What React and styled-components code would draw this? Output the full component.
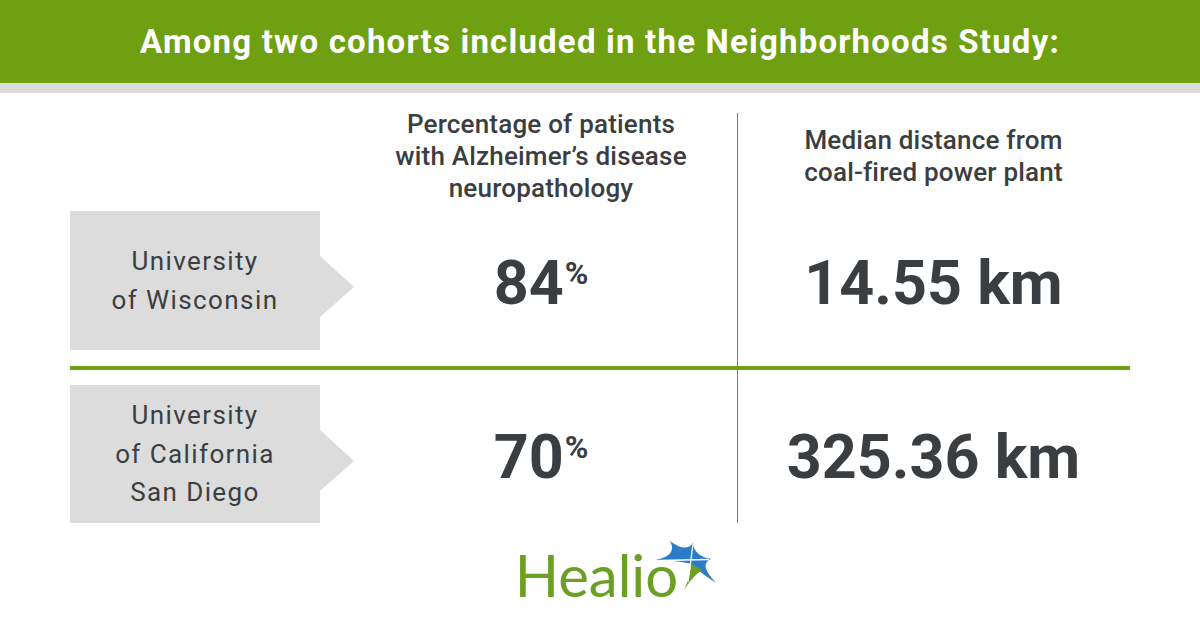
import styled, { createGlobalStyle } from "styled-components";

const GREEN = "#6ea011";
const INK = "#3a3e41";

const GlobalStyle = createGlobalStyle`
  body {
    margin: 0;
    background: #fff;
    font-family: Roboto, "Liberation Sans", sans-serif;
  }
`;

const Page = styled.div`
  width: 1200px;
  height: 630px;
  overflow: hidden;
  background: #fff;
`;

const Banner = styled.header`
  height: 83px;
  background: ${GREEN};
  display: flex;
  align-items: center;
  justify-content: center;
`;

const Title = styled.h1`
  margin: 0;
  color: #fff;
  font-size: 33px;
  font-weight: 700;
  letter-spacing: 1.2px;
  white-space: nowrap;
`;

const Shade = styled.div`
  height: 10px;
  background: #dcdcdc;
`;

const Table = styled.div`
  position: relative;
  margin: 0 70px;
  padding-top: 13px;

  &::after {
    content: "";
    position: absolute;
    left: 667px;
    top: 20px;
    bottom: 0;
    width: 1px;
    background: #7a7a7a;
  }
`;

const Row = styled.div`
  display: grid;
  grid-template-columns: 275px 392px 393px;
  height: ${(p) => p.$h}px;
  margin-bottom: ${(p) => p.$gap || 0}px;
`;

const HeadCell = styled.div`
  display: flex;
  align-items: center;
  justify-content: center;
  text-align: center;
  color: ${INK};
  font-size: 26px;
  font-weight: 500;
  line-height: 32px;
  letter-spacing: 0.2px;
`;

const LabelShape = styled.div`
  width: 284px;
  height: 100%;
  background: #dcdcdc;
  clip-path: polygon(
    0 0,
    250px 0,
    250px 45px,
    284px 76px,
    250px 106px,
    250px 100%,
    0 100%
  );
  display: flex;
  align-items: center;
  justify-content: center;
  padding-right: 34px;
  box-sizing: border-box;
  text-align: center;
  color: ${INK};
  font-size: 26px;
  font-weight: 400;
  line-height: 38.5px;
  letter-spacing: 1.4px;
`;

const ValueCell = styled.div`
  display: flex;
  align-items: center;
  justify-content: center;
  padding-top: 6px;
  color: ${INK};
  font-size: 61px;
  font-weight: 700;
  line-height: 61px;
  white-space: nowrap;
`;

const Sup = styled.span`
  font-size: 32px;
  line-height: 1;
  vertical-align: 20px;
  margin-left: 1px;
`;

const Rule = styled.div`
  height: 4px;
  background: ${GREEN};
  margin: 16px 0 15px;
`;

const Logo = styled.div`
  display: flex;
  justify-content: center;
  align-items: flex-start;
  margin-top: 23px;
  padding-left: 36px;
`;

const Wordmark = styled.span`
  font-family: Lato, "Open Sans", sans-serif;
  font-size: 58px;
  line-height: 58px;
  color: #6ba024;
`;

const Star = styled.svg`
  width: 75px;
  height: 60px;
  margin-left: -32px;
  margin-top: -12px;
`;

const rows = [
  { label: ["University", "of Wisconsin"], pct: "84", km: "14.55 km", h: 139 },
  { label: ["University", "of California", "San Diego"], pct: "70", km: "325.36 km", h: 138 },
];

const DataRow = ({ row }) => (
  <Row $h={row.h}>
    <LabelShape>
      <div>
        {row.label.map((l) => (
          <div key={l}>{l}</div>
        ))}
      </div>
    </LabelShape>
    <ValueCell>
      <span>
        {row.pct}
        <Sup>%</Sup>
      </span>
    </ValueCell>
    <ValueCell>
      <span>{row.km}</span>
    </ValueCell>
  </Row>
);

export default function App() {
  return (
    <Page>
      <GlobalStyle />
      <Banner>
        <Title>Among two cohorts included in the Neighborhoods Study:</Title>
      </Banner>
      <Shade />
      <Table>
        <Row $h={100} $gap={5}>
          <div />
          <HeadCell>
            Percentage of patients
            <br />
            with Alzheimer’s disease
            <br />
            neuropathology
          </HeadCell>
          <HeadCell>
            Median distance from
            <br />
            coal-fired power plant
          </HeadCell>
        </Row>
        <DataRow row={rows[0]} />
        <Rule />
        <DataRow row={rows[1]} />
      </Table>
      <Logo>
        <Wordmark>Healio</Wordmark>
        <Star viewBox="0 0 75 60">
          <path
            d="M10,26 Q32,21 24,7 Q40,19 47,9 Q48,22 65,25 Q52,30 70,49 Q52,37 45,30 Q36,27 10,26 Z"
            fill="#2a7cc9"
          />
          <path d="M45,30 Q44,44 38,56 Q47,42 56,36 Z" fill="#6ba024" />
          <path d="M47,10 L42,48 M13,26.5 L63,25.5" stroke="#fff" strokeWidth="1.3" />
        </Star>
      </Logo>
    </Page>
  );
}
